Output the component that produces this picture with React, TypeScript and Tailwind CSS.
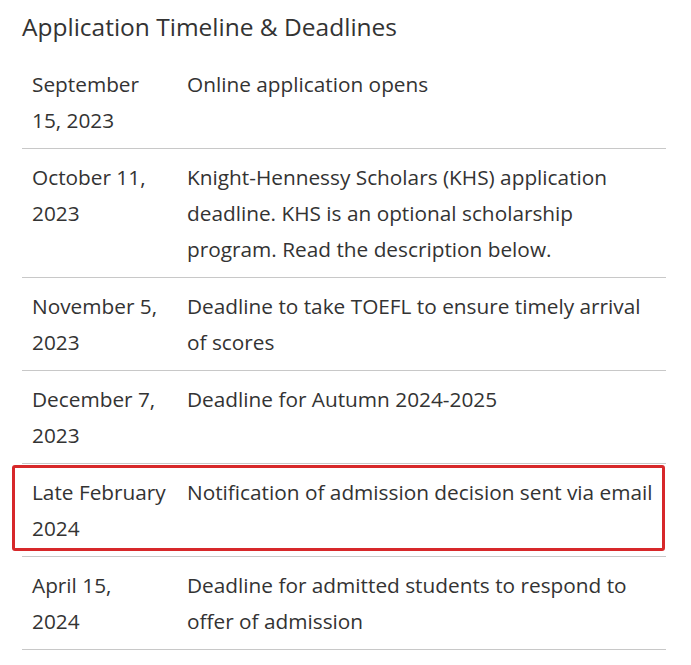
const rows: { date: string[]; text: string[]; highlight?: boolean }[] = [
  { date: ["September", "15, 2023"], text: ["Online application opens"] },
  {
    date: ["October 11,", "2023"],
    text: [
      "Knight-Hennessy Scholars (KHS) application",
      "deadline. KHS is an optional scholarship",
      "program. Read the description below.",
    ],
  },
  { date: ["November 5,", "2023"], text: ["Deadline to take TOEFL to ensure timely arrival", "of scores"] },
  { date: ["December 7,", "2023"], text: ["Deadline for Autumn 2024-2025"] },
  { date: ["Late February", "2024"], text: ["Notification of admission decision sent via email"], highlight: true },
  { date: ["April 15,", "2024"], text: ["Deadline for admitted students to respond to", "offer of admission"] },
];

export default function App() {
  return (
    <div className="w-[691px] h-[665px] bg-white font-['Open_Sans',sans-serif] text-[#333333] pl-[22px] pr-[25px] pt-[10px] overflow-hidden">
      <h2 className="text-[24.5px] leading-[34px] text-[#333333]">Application Timeline &amp; Deadlines</h2>
      <table className="w-full mt-[12px] border-collapse text-[20.8px] leading-[36px] table-fixed">
        <tbody>
          {rows.map((r) => (
            <tr key={r.date.join(" ")} className="border-b border-[#c8c8c8]">
              <td className="w-[155px] align-top px-[10px] py-[10px] relative whitespace-nowrap">
                {r.highlight && (
                  <div className="absolute left-[-10px] top-[1px] w-[653px] h-[86px] border-[3px] border-[#d7282a] rounded-[3px] pointer-events-none" />
                )}
                {r.date.map((l) => (
                  <div key={l}>{l}</div>
                ))}
              </td>
              <td className="align-top px-[10px] py-[10px] whitespace-nowrap">
                {r.text.map((l) => (
                  <div key={l}>{l}</div>
                ))}
              </td>
            </tr>
          ))}
        </tbody>
      </table>
    </div>
  );
}
